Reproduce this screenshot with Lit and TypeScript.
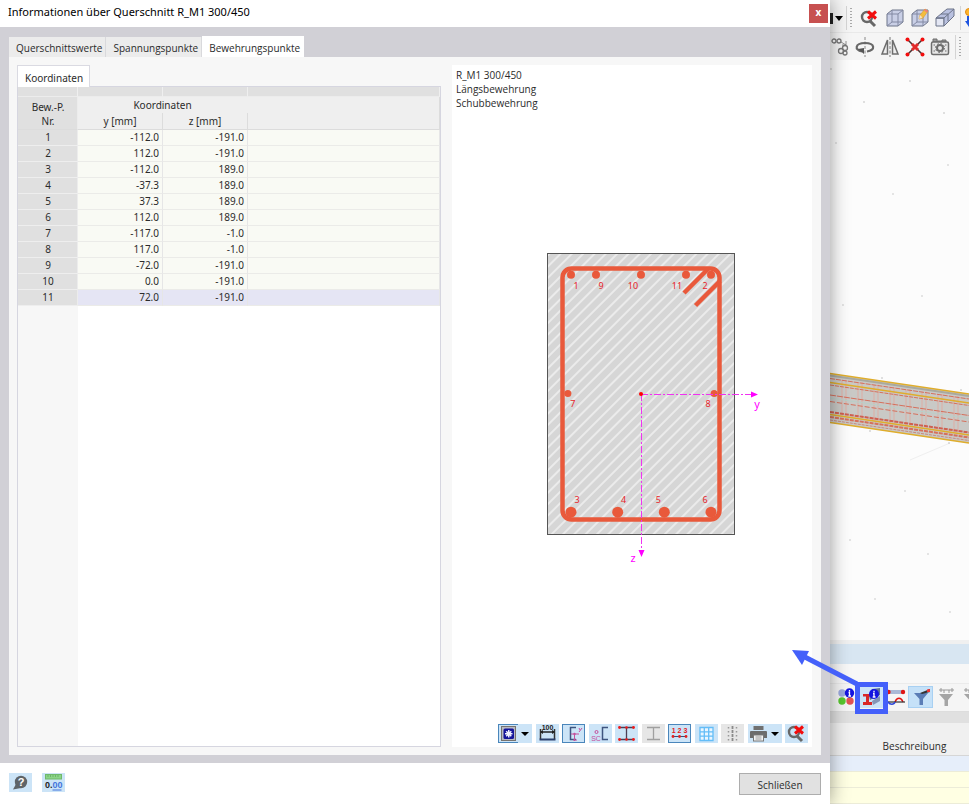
import { LitElement, html, svg, css } from "lit";
import { customElement, property, state } from "lit/decorators.js";
import { classMap } from "lit/directives/class-map.js";

interface Bar {
  nr: number;
  y: number;
  z: number;
  r: number;
  dx: number;
  dy: number;
}

/* Rebar points in mm; r, dx and dy are the dot radius and label shift on screen. */
const BARS: Bar[] = [
  { nr: 1, y: -112, z: -191, r: 4, dx: 5, dy: 11 },
  { nr: 2, y: 112, z: -191, r: 4, dx: -6, dy: 11 },
  { nr: 3, y: -112, z: 189, r: 5.5, dx: 6, dy: -12 },
  { nr: 4, y: -37.3, z: 189, r: 5.5, dx: 6, dy: -12 },
  { nr: 5, y: 37.3, z: 189, r: 5.5, dx: -6, dy: -12 },
  { nr: 6, y: 112, z: 189, r: 5.5, dx: -6, dy: -12 },
  { nr: 7, y: -117, z: -1, r: 3.5, dx: 5, dy: 11 },
  { nr: 8, y: 117, z: -1, r: 3.5, dx: -6, dy: 11 },
  { nr: 9, y: -72, z: -191, r: 4, dx: 5, dy: 11 },
  { nr: 10, y: 0, z: -191, r: 4, dx: -8, dy: 11 },
  { nr: 11, y: 72, z: -191, r: 4, dx: -9, dy: 11 },
];

const SCALE = 0.625;

const magnifierX = svg`
  <circle cx="9" cy="8" r="5" fill="none" stroke="#686868" stroke-width="2.4"/>
  <path d="M12 12L17 17" stroke="#686868" stroke-width="3"/>
  <path d="M10 2.5L18 9.5M18 2.5L10 9.5" stroke="#f20d0d" stroke-width="3"/>`;

const cube = svg`
  <path d="M2 6L7 2H18V14L13 18H2Z" fill="#c9cfe6" stroke="#6d7489"/>
  <path d="M2 6H13V18M13 6L18 2M7 2V14H18M7 14L2 18" fill="none" stroke="#8289a3"/>`;

const icons: Record<string, unknown> = {
  magnifierX,
  cube,
  cubeEdit: svg`${cube}
    <path d="M9 11L10 7L15 1L18 3L13 10Z" fill="#f3bd3c" stroke="#d99a2b" stroke-width=".6"/>
    <path d="M9 11L10 7L12.500 9.500Z" fill="#f6dfc0"/><path d="M15 1L18 3L17 4.500L14 2.500Z" fill="#ef7d7d"/>`,
  extrude: svg`
    <path d="M1 10H9V18H1Z" fill="#e4e7f4" stroke="#6d7489"/>
    <path d="M1 10L12 1H19V8L9 18V10Z" fill="#b9c1e0" stroke="#6d7489"/>
    <path d="M1 10H9L19 1M6 6H13V13" fill="none" stroke="#6d7489"/>`,
  load: svg`<path d="M4 8V15" stroke="#1f55e0" stroke-width="4"/><path d="M0 13H9L4 19Z" fill="#1f55e0"/>
    <circle cx="4" cy="4" r="3.500" fill="#ffb52b" stroke="#e08a12"/>`,
  copyNodes: svg`<g fill="none" stroke="#777" stroke-width="1.300"><circle cx="3" cy="4" r="2"/><circle cx="8" cy="4" r="2"/>
    <circle cx="10" cy="14" r="2.500"/><circle cx="14" cy="11" r="2.500"/><circle cx="14" cy="16" r="2"/><path d="M10 5L15 8M15 4V8H11" stroke-width=".8"/></g>`,
  rotate: svg`<path d="M10 0V20" stroke="#888" stroke-dasharray="3 1.500"/>
    <path d="M7 14.500C-1 13 0 6 10 6S21 13 12 14.500" fill="none" stroke="#686868" stroke-width="2.200"/><path d="M3 12L9 11V17Z" fill="#555"/>`,
  mirror: svg`<path d="M10 0V20" stroke="#777" stroke-dasharray="3 1.500"/>
    <path d="M7.500 3V17H2ZM12.500 3V17H18Z" fill="#eee" stroke="#6d6d6d" stroke-width="1.500"/>`,
  cross: svg`<path d="M2 2L18 18M18 2L2 18" stroke="#4d3030" stroke-width="1.600"/>
    <path d="M7 7L13 13M13 7L7 13" stroke="#e22b2b" stroke-width="3"/>
    <g fill="#f20d0d"><circle cx="2.500" cy="2.500" r="2"/><circle cx="17.500" cy="2.500" r="2"/><circle cx="2.500" cy="17.500" r="2"/><circle cx="17.500" cy="17.500" r="2"/></g>`,
  camera: svg`<path d="M3 2H7V4H12V3H16V5H3Z" fill="#999" stroke="#6d6d6d"/>
    <rect x="1.500" y="5" width="17" height="12.500" rx="1.500" fill="#e6e6e6" stroke="#6d6d6d" stroke-width="1.500"/>
    <circle cx="10" cy="11" r="3" fill="none" stroke="#6d6d6d" stroke-width="2"/><circle cx="10" cy="11" r="4.500" fill="none" stroke="#6d6d6d" stroke-dasharray="1.700 1.830"/>
    <path d="M3.500 8H5M15 8H16.500M3.500 14H5M15 14H16.500" stroke="#6d6d6d"/>`,
  colors: svg`<circle cx="6" cy="6" r="3.700" fill="#9ba9dd"/><circle cx="6" cy="14" r="3.700" fill="#58c72e"/><circle cx="14" cy="14" r="3.700" fill="#e25252"/>
    <circle cx="13.500" cy="6" r="4.700" fill="#1414e0"/><path d="M13.500 3V4.400M12.500 5.500H13.500V9M12.300 9H15" stroke="#fff" stroke-width="1.300" fill="none"/>`,
  sectionInfo: svg`<path d="M8 9L11 2L19 1V8L9 13Z" fill="#5f7496"/><path d="M11 14L19 9V14L12 18Z" fill="#8495b5"/>
    <path d="M2 7H11V9.500H8V15H11V18H2V15H5V9.500H2Z" fill="#d82727"/>
    <circle cx="13" cy="7" r="5" fill="#1414e0"/><path d="M13 3.800V5.300M12 6.500H13V10M11.700 10H14.500" stroke="#fff" stroke-width="1.300" fill="none"/>`,
  member: svg`<path d="M3 5H17" stroke="#a9b8d6" stroke-width="4"/><circle cx="2.500" cy="5" r="2.200" fill="#e01515"/><circle cx="17" cy="5" r="2.200" fill="#e01515"/>
    <path d="M9 15C11 10 15 10 17 15" fill="none" stroke="#e01515" stroke-width="1.500"/><path d="M1 15H19" stroke="#333" stroke-width="1.200"/><path d="M2 15C4 18 8 18 9 15" fill="none" stroke="#2d46d8" stroke-width="1.500"/>`,
  filter: svg`<path d="M3 6H17L12 12V18H8.500V12Z" fill="#5b7db6"/><path d="M9 6L19 2V5L11 7Z" fill="#333"/><path d="M16 2.500L19 2V5L16 5Z" fill="#e33"/>`,
  filterOff: svg`<path d="M3 7H17L12 13V19H8.500V13Z" fill="#a5a5a5"/><path d="M3 3H18M5 1V5M16 1V5M8 3V6M13 3V6" stroke="#999"/>`,
  section: svg`<rect x="3.500" y="2.500" width="14" height="14" fill="#b8bac4" stroke="#77736e"/>
    <rect x="5.500" y="4.500" width="10.500" height="10.500" rx="1.500" fill="#14149a"/>
    <path d="M10.750 6V13.500M7 9.750H14.500M8.200 7.200L13.300 12.300M13.300 7.200L8.200 12.300" stroke="#f0f0ff" stroke-width="1.500"/>`,
  dimension: svg`<text x="11.500" y="6" class="tiny dark">100</text><path d="M4 8H19" stroke="#222" stroke-width="1.500"/>
    <path d="M4.500 5V15M18.500 5V15" stroke="#333" stroke-width="1.500"/><path d="M3.500 15.500H19.500" stroke="#2b3f6b" stroke-width="2"/><path d="M4 8L7 6V10ZM19 8L16 6V10Z" fill="#222"/>`,
  axes: svg`<path d="M14 3.500H8.500V15.500H14" fill="none" stroke="#3f5580" stroke-width="1.500"/>
    <path d="M9 10H17M12.500 10V17M17 4L18 6M20 4L17 8M11 16H15" fill="none" stroke="#c4509c"/><circle cx="12.500" cy="10" r="1.200" fill="#c4509c"/>`,
  shearCenter: svg`<path d="M19 3.500H13.500V15.500H19" fill="none" stroke="#3f5580" stroke-width="1.500"/>
    <circle cx="7.500" cy="8" r="1.500" fill="none" stroke="#c4509c"/><text x="7" y="17" class="sc">SC</text>`,
  parts: svg`<path d="M4.500 3.500H18.500M4.500 15.500H18.500M11.500 3.500V15.500" stroke="#4a3e55" stroke-width="1.300"/>
    <g fill="#f01818"><circle cx="4.500" cy="3.500" r="1.400"/><circle cx="18.500" cy="3.500" r="1.400"/><circle cx="4.500" cy="15.500" r="1.400"/><circle cx="18.500" cy="15.500" r="1.400"/><circle cx="11.500" cy="3.500" r="1.300"/><circle cx="11.500" cy="15.500" r="1.300"/></g>`,
  partsOff: svg`<path d="M5 3.500H18M5 15.500H18M11.500 3.500V15.500" stroke="#a0a0a0" stroke-width="1.300"/>`,
  numbers: svg`<text x="11.500" y="9" class="tiny red">1 2 3</text><path d="M5 12.500H18" stroke="#355079"/>
    <g fill="#e22020"><circle cx="5" cy="12.500" r="1.400"/><circle cx="11.500" cy="12.500" r="1.400"/><circle cx="18" cy="12.500" r="1.400"/></g>`,
  grid: svg`<path d="M5 3.500H18V16.500H5ZM9.300 3.500V16.500M13.700 3.500V16.500M5 7.800H18M5 12.200H18" fill="#eaf6ff" stroke="#63bdf8" stroke-width="1.300"/>`,
  dots: svg`<path d="M7.500 3V17M15.500 3V17" stroke="#999" stroke-width="1.500" stroke-dasharray="1.500 2.500"/><path d="M11.500 2V17" stroke="#8a8a8a" stroke-width="1.800" stroke-dasharray="3 1"/>`,
  print: svg`<rect x="5.500" y="2" width="10" height="4" fill="#707070"/><path d="M2 8Q2 7 3 7H18Q19 7 19 8V14H2Z" fill="#6c6c6c"/>
    <rect x="5.500" y="11" width="10" height="6" fill="#f3f3f3" stroke="#777"/><path d="M7.500 13H13.500M7.500 15H13.500" stroke="#999"/>`,
  help: svg`<circle cx="12" cy="9" r="6.200" fill="#5f6468"/><path d="M7 11L4 16.500L12 15Z" fill="#5f6468"/><text x="12" y="13" class="help">?</text>`,
  units: svg`<rect x="3.500" y="1.500" width="16" height="4.500" fill="#8bd487" stroke="#6fb96b"/><path d="M6 2V4M8.500 2V4M11 2V4M13.500 2V4M16 2V4" stroke="#5fa65c" stroke-width=".7"/>
    <text x="3" y="15" class="zero">0.<tspan fill="#4274dd">00</tspan></text><path d="M10.500 17H19.500" stroke="#4274dd"/>`,
};

/* These icons are drawn on a 20 by 20 grid, the others on 23 by 19. */
const SQUARE = new Set([
  "cube", "cubeEdit", "extrude", "load", "copyNodes", "rotate", "mirror", "cross",
  "camera", "colors", "sectionInfo", "member", "filter", "filterOff",
]);

@customElement("tool-button")
class ToolButton extends LitElement {
  @property() icon = "";
  @property() label = "";
  @property({ type: Boolean }) menu = false;

  static styles = css`
    :host {
      display: block;
      flex: none;
    }
    .btn {
      display: flex;
      align-items: center;
      justify-content: center;
      width: 100%;
      height: 100%;
      padding: 0;
      border: 0;
      background: none;
    }
    .menu { justify-content: flex-start; }
    .icon {
      display: block;
      flex: none;
      width: 23px;
      height: 19px;
    }
    .square { width: 20px; height: 20px; }
    .caret {
      flex: none;
      border: 4px solid transparent;
      border-top: 4px solid #000;
      border-bottom: 0;
    }
    text {
      font-family: "Liberation Sans", sans-serif;
      font-weight: 700;
      text-anchor: middle;
    }
    .tiny { font-size: 7px; }
    .dark { fill: #222; }
    .red { fill: #e22020; }
    .sc { font-size: 7px; font-weight: 400; fill: #c4509c; }
    .help { font-size: 11px; fill: #fff; }
    .zero { font-size: 9px; fill: #222; text-anchor: start; }
  `;

  render() {
    const square = SQUARE.has(this.icon);
    return html`<button class=${classMap({ btn: true, menu: this.menu })} type="button" aria-label=${this.label}>
      <svg class=${classMap({ icon: true, square })} viewBox=${square ? "0 0 20 20" : "0 0 23 19"} aria-hidden="true">${icons[this.icon]}</svg>
      ${this.menu ? html`<span class="caret"></span>` : ""}
    </button>`;
  }
}

@customElement("section-drawing")
class SectionDrawing extends LitElement {
  static styles = css`
    :host { display: block; }
    .drawing { display: block; width: 280px; height: 328px; }
    text {
      font-family: "Noto Sans", sans-serif;
      font-size: 9px;
      text-anchor: middle;
      fill: #e8252b;
    }
    .axis { font-size: 11px; fill: #f0f; }
  `;

  render() {
    return html`<svg class="drawing" viewBox="-149 -144 280 328" role="img" aria-label="Querschnitt R_M1 300/450">
      <defs>
        <pattern id="hatch" width="8" height="8" patternUnits="userSpaceOnUse" patternTransform="rotate(45)">
          <rect width="8" height="8" fill="#d6d6d6"/><path d="M4 0V8" stroke="#f4f4f4" stroke-width="1.400"/>
        </pattern>
      </defs>
      <rect x="-93.500" y="-140.500" width="187" height="281" fill="url(#hatch)" stroke="#555"/>
      <g fill="none" stroke="#e9593b" stroke-width="4.500">
        <rect x="-78.500" y="-125.500" width="157" height="251" rx="9"/>
        <path d="M67 -125L43 -101M79 -113L54.500 -88.500"/>
      </g>
      ${BARS.map(
        (b) => svg`<circle cx=${b.y * SCALE} cy=${b.z * SCALE} r=${b.r} fill="#e9593b"/>
          <text x=${b.y * SCALE + b.dx} y=${b.z * SCALE + b.dy + 3}>${b.nr}</text>`
      )}
      <path d="M0 .5H110M.5 0V156" fill="none" stroke="#f032f0" stroke-dasharray="7 2 2 2"/>
      <path d="M110 -2.500L117 .5L110 3.500ZM-2.500 156H3.500L.5 163Z" fill="#f0f"/>
      <circle cx="0" cy="0" r="2" fill="#f00"/>
      <text class="axis" x="116" y="14">y</text>
      <text class="axis" x="-8" y="168">z</text>
    </svg>`;
  }
}

@customElement("app-root")
class AppRoot extends LitElement {
  @state() tab = 2;
  @state() selected = 11;

  static styles = css`
    :host {
      display: grid;
      grid-template-columns: minmax(0, 1fr) 139px;
      min-height: 100vh;
      overflow: hidden;
      font: 10px/14px "Open Sans", sans-serif;
      color: #2b2b2b;
      background: #fff;
    }
    * { box-sizing: border-box; }
    button { font: inherit; color: inherit; }

    .dialog {
      position: relative;
      z-index: 1;
      display: flex;
      flex-direction: column;
      background: #fff;
      box-shadow: 0 0 18px rgba(0, 0, 0, 0.4);
    }
    .titlebar {
      display: flex;
      align-items: center;
      justify-content: space-between;
      height: 27px;
      padding: 0 2px 3px 8px;
    }
    .title { margin: 0; font: 11px/16px "Noto Sans", sans-serif; color: #000; }
    .close {
      width: 19px;
      height: 19px;
      margin-top: 2px;
      padding: 0 0 2px;
      border: 0;
      background: #c75050;
      color: #fff;
      font-weight: 700;
    }
    .body {
      flex: 1;
      display: flex;
      flex-direction: column;
      padding: 9px 9px 8px;
      background: #d1d0d6;
    }
    .tabs { display: flex; align-items: flex-end; height: 21px; }
    .tab {
      height: 20px;
      padding: 2px 3px 0 7px;
      border: 0;
      border-right: 1px solid #d9d9dc;
      background: #ececec;
    }
    .tab.active { height: 21px; border-color: #fff; background: #fff; }
    .panel {
      flex: 1;
      display: grid;
      grid-template-columns: minmax(0, 1fr) 360px;
      gap: 11px;
      padding: 8px 9px 8px 8px;
      background: #f7f7f7;
    }
    .sheet { display: flex; flex-direction: column; font-family: "Noto Sans", sans-serif; }
    .subtab {
      position: relative;
      align-self: flex-start;
      height: 22px;
      margin-bottom: -1px;
      padding: 3px 6px 0 7px;
      border: 1px solid #dadae2;
      border-bottom: 0;
      background: #fff;
    }
    .gridbox {
      flex: 1;
      border: 1px solid #d6d6e0;
      background: linear-gradient(90deg, #f7f7f7 60px, #fff 60px);
    }
    .points {
      width: 100%;
      table-layout: fixed;
      border-collapse: separate;
      border-spacing: 0;
    }
    .nr { width: 60px; }
    .coord { width: 85px; }
    .points th, .points td { height: 16px; padding: 0; font-weight: 400; line-height: 15px; }
    .points .strip td { height: 10px; border-right: 1px solid #efefef; border-bottom: 1px solid #ececec; background: #e0e0e0; }
    .points thead th, .points thead .blank { background: #efefef; border-right: 1px solid #dcdcdc; }
    .points thead .group { border-right-color: #efefef; }
    .points thead .last { height: 17px; border-bottom: 1px solid #dcdcdc; }
    .points thead .corner { padding: 2px 0 0 1px; line-height: 14px; background: #e0e0e0; border-right-color: #ececec; }
    .points tbody th { padding-left: 1px; background: #e0e0e0; border-right: 1px solid #ececec; border-bottom: 1px solid #eee; }
    .points tbody td {
      padding-right: 3px;
      border-right: 1px solid #e6e6e6;
      border-bottom: 1px solid #ebebe8;
      background: #f9faf4;
      text-align: right;
    }
    .points tbody .sel td { background: #e5e5f4; }

    .preview { display: flex; flex-direction: column; padding: 3px 4px 4px; background: #fff; }
    .caption { margin: 0; }
    .stage { flex: 1; display: flex; align-items: center; justify-content: center; padding-bottom: 6px; }
    .viewbar { display: flex; justify-content: space-between; width: 310px; margin-left: auto; }
    .viewbar tool-button { width: 23px; height: 19px; background: #cce4f7; }
    .viewbar .wide { width: 34px; }
    .viewbar .on { box-shadow: inset 0 0 0 1px #4a86bb; }
    .viewbar .part { background: linear-gradient(#4a86bb, #4a86bb) 0 0 / 20px 1px no-repeat, linear-gradient(#4a86bb, #4a86bb) 0 100% / 20px 1px no-repeat, linear-gradient(#4a86bb, #4a86bb) 0 0 / 1px 100% no-repeat, #cce4f7; }
    .viewbar .off { background: #e6e6e6; }

    .footer { display: flex; align-items: center; gap: 10px; height: 41px; padding: 0 9px 2px; }
    .footer tool-button { width: 23px; height: 19px; background: #cce4f7; }
    .ok {
      width: 82px;
      height: 22px;
      margin: 2px 0 0 auto;
      padding: 2px 0 0;
      border: 1px solid #adadad;
      background: #e1e1e1;
    }

    .host { display: flex; flex-direction: column; min-width: 0; background: #fcfcfc; }
    .bar { display: flex; flex: none; align-items: center; height: 32px; background: #f5f5f5; }
    .bar tool-button { width: 25px; height: 22px; }
    .bar .narrow { width: 22px; }
    .bar.upper { height: 33px; padding-top: 4px; border-bottom: 1px solid #e9e9e9; }
    .bar.lower { height: 27px; }
    .frag, .more, .rule, .grip { flex: none; }
    .frag { width: 3px; height: 11px; background: #222; }
    .more { margin-left: 2px; border: 4px solid transparent; border-top: 5px solid #000; border-bottom: 0; }
    .rule { width: 1px; height: 24px; margin: 0 3px; background: #d4d4d4; }
    .grip { width: 2px; height: 20px; margin-right: 5px; background: repeating-linear-gradient(#aaa 0 1px, transparent 1px 3px); }
    .canvas { flex: 1; display: flex; align-items: center; min-height: 0; }
    .scene { display: block; width: 139px; height: 570px; }
    .band { height: 24px; border-top: 4px solid #f0f0f0; background: #d8e6f2; }
    .spacer { height: 20px; border-bottom: 1px solid #ebebeb; background: #f7f7f7; }
    .bar.results { height: 28px; padding-left: 3px; border-bottom: 1px solid #ddd; }
    .marked { position: relative; z-index: 2; background: #cce4f7; }
    .results .chosen { background: #c5e1f8; box-shadow: inset 0 0 0 1px #a8d0f2; }
    .callout { position: absolute; left: -67px; top: -38px; width: 98px; height: 68px; pointer-events: none; }
    .gap { height: 11px; background: #e0e0e0; }
    .list { width: 100%; border-collapse: collapse; }
    .list th { height: 33px; padding: 0 0 0 30px; border-bottom: 1px solid #d6d6d6; background: #f0f0f0; font-weight: 400; vertical-align: bottom; line-height: 18px; }
    .list td { height: 16px; padding: 0; border-bottom: 1px solid #ececd8; background: #ffffe3; }
    .list .first { background: #e6eefa; }
  `;

  private tool(icon: string, label: string, cls = "", menu = false) {
    return html`<tool-button class=${cls} icon=${icon} label=${label} ?menu=${menu}></tool-button>`;
  }

  private renderTable() {
    return html`<table class="points">
      <colgroup><col class="nr" /><col class="coord" /><col class="coord" /><col /></colgroup>
      <thead>
        <tr class="strip"><td></td><td></td><td></td><td></td></tr>
        <tr>
          <th class="corner last" rowspan="2" scope="col">Bew.-P.<br />Nr.</th>
          <th class="group" colspan="2" scope="colgroup">Koordinaten</th>
          <td class="blank last" rowspan="2"></td>
        </tr>
        <tr><th class="last" scope="col">y [mm]</th><th class="last" scope="col">z [mm]</th></tr>
      </thead>
      <tbody>
        ${BARS.map(
          (b) => html`<tr class=${classMap({ sel: b.nr === this.selected })} @click=${() => (this.selected = b.nr)}>
            <th scope="row">${b.nr}</th><td>${b.y.toFixed(1)}</td><td>${b.z.toFixed(1)}</td><td></td>
          </tr>`
        )}
      </tbody>
    </table>`;
  }

  private renderScene() {
    const stirrups = Array.from({ length: 9 }, (_, i) => 12 + i * 16);
    const line = (y: number, color: string, w = 1, dash = "") =>
      svg`<path d="M0 ${y}L139 ${y + 20.5}" stroke=${color} stroke-width=${w} stroke-dasharray=${dash} fill="none"/>`;
    return html`<svg class="scene" viewBox="0 5 139 570" aria-hidden="true">
      <path d="M0 313.500L139 334V383L0 362.500Z" fill="#c9c9c6"/>
      ${stirrups.map((x) => {
        const y = 318 + x * 0.147;
        return svg`<path d="M${x} ${y}v36M${x + 4} ${y}v36" stroke="#e3a79d" stroke-width=".8"/>`;
      })}
      ${line(315.5, "#a9a9a0", 2)}
      ${line(318.5, "#d6705c", 1, "5 1")}
      ${line(322.5, "#dfad2c", 1.5)}
      ${line(325, "#d6705c", 1, "4 1")}
      ${line(335, "#d6705c", 1, "6 1")}
      ${line(338, "#b9cfc8")}
      ${line(341.5, "#d6705c", 1, "5 2")}
      ${line(352, "#cf5f50", 2, "4 1")}
      ${line(354.5, "#dfad2c", 1.5)}
      ${line(357, "#d6705c", 2, "4 1")}
      ${line(360, "#c98a80", 1, "3 1")}
      ${line(313.5, "#dfad2c", 1.5)}
      ${line(362.5, "#dfad2c", 1.5)}
      <path d="M80 400L120 383" stroke="#efefef"/>
      <g fill="#bbb"><circle cx="1" cy="9" r=".8"/><circle cx="80" cy="21" r=".8"/><circle cx="34" cy="42" r=".8"/><circle cx="114" cy="53" r=".8"/>
        <circle cx="6" cy="83" r=".7"/><circle cx="63" cy="134" r=".7"/><circle cx="118" cy="105" r=".7"/><circle cx="92" cy="236" r=".7"/><circle cx="13" cy="245" r=".7"/>
        <circle cx="52" cy="318" r=".8"/><circle cx="131" cy="330" r=".8"/><circle cx="40" cy="371" r=".8"/><circle cx="119" cy="383" r=".8"/>
        <circle cx="75" cy="431" r=".7"/><circle cx="20" cy="480" r=".7"/><circle cx="98" cy="494" r=".7"/><circle cx="45" cy="539" r=".7"/><circle cx="120" cy="552" r=".7"/></g>
    </svg>`;
  }

  render() {
    const tabs = ["Querschnittswerte", "Spannungspunkte", "Bewehrungspunkte"];
    return html`
      <section class="dialog" role="dialog" aria-labelledby="title">
        <header class="titlebar">
          <h1 class="title" id="title">Informationen über Querschnitt R_M1 300/450</h1>
          <button class="close" type="button" aria-label="Schließen">x</button>
        </header>
        <div class="body">
          <div class="tabs" role="tablist">
            ${tabs.map(
              (t, i) => html`<button class=${classMap({ tab: true, active: i === this.tab })} type="button" role="tab"
                aria-selected=${i === this.tab} @click=${() => (this.tab = i)}>${t}</button>`
            )}
          </div>
          <div class="panel" role="tabpanel">
            <div class="sheet">
              <button class="subtab" type="button">Koordinaten</button>
              <div class="gridbox">${this.renderTable()}</div>
            </div>
            <div class="preview">
              <p class="caption">R_M1 300/450<br />Längsbewehrung<br />Schubbewehrung</p>
              <div class="stage"><section-drawing></section-drawing></div>
              <div class="viewbar" role="toolbar">
                ${this.tool("section", "Querschnitt", "wide part", true)}
                ${this.tool("dimension", "Bemaßung")}
                ${this.tool("axes", "Hauptachsen", "on")}
                ${this.tool("shearCenter", "Schubmittelpunkt")}
                ${this.tool("parts", "Querschnittsteile")}
                ${this.tool("partsOff", "Spannungspunkte", "off")}
                ${this.tool("numbers", "Nummerierung", "on")}
                ${this.tool("grid", "Raster")}
                ${this.tool("dots", "Punktraster", "off")}
                ${this.tool("print", "Drucken", "wide", true)}
                ${this.tool("magnifierX", "Zoom zurücksetzen")}
              </div>
            </div>
          </div>
        </div>
        <footer class="footer">
          ${this.tool("help", "Hilfe")} ${this.tool("units", "Einheiten")}
          <button class="ok" type="button">Schließen</button>
        </footer>
      </section>

      <main class="host">
        <div class="bar upper">
          <span class="frag"></span><span class="more"></span><span class="rule"></span><span class="grip"></span>
          ${this.tool("magnifierX", "Zoom zurücksetzen")} ${this.tool("cube", "Isometrie")}
          ${this.tool("cubeEdit", "Ansicht bearbeiten")} ${this.tool("extrude", "Extrudieren")}
          <span class="rule"></span>${this.tool("load", "Last", "narrow")}
        </div>
        <div class="bar lower">
          ${this.tool("copyNodes", "Kopieren", "narrow")} ${this.tool("rotate", "Drehen")}
          ${this.tool("mirror", "Spiegeln")} ${this.tool("cross", "Teilen")} ${this.tool("camera", "Ansicht speichern")}
          <span class="rule"></span><span class="grip"></span><span class="rule"></span>
        </div>
        <div class="canvas">${this.renderScene()}</div>
        <div class="band"></div>
        <div class="spacer"></div>
        <div class="bar results">
          ${this.tool("colors", "Farben")}
          <div class="marked">
            ${this.tool("sectionInfo", "Querschnittsinfo")}
            <svg class="callout" viewBox="0 0 98 68" aria-hidden="true">
              <g fill="none" stroke="#4460fa"><rect x="66.500" y="36.500" width="28" height="27" stroke-width="5"/><path d="M66 36L10 7" stroke-width="5"/></g>
              <path d="M1 2L18 3L11 17Z" fill="#4460fa"/>
            </svg>
          </div>
          ${this.tool("member", "Stabergebnisse")} ${this.tool("filter", "Filter", "chosen")}
          ${this.tool("filterOff", "Filter aus")} ${this.tool("filterOff", "Filter aus")}
        </div>
        <div class="gap"></div>
        <table class="list">
          <thead><tr><th scope="col">Beschreibung</th></tr></thead>
          <tbody><tr><td class="first"></td></tr><tr><td></td></tr><tr><td></td></tr></tbody>
        </table>
      </main>
    `;
  }
}
